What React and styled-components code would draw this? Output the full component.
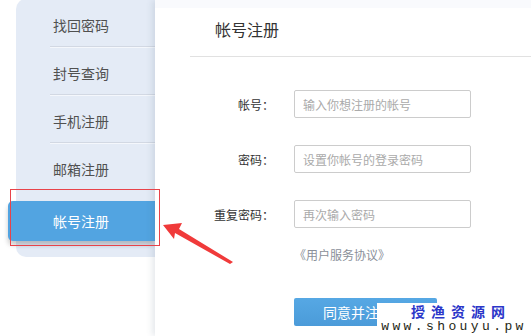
import styled, { createGlobalStyle } from "styled-components"

const menu = ["找回密码", "封号查询", "手机注册", "邮箱注册"]

const fields = [
    { label: "帐号：", hint: "输入你想注册的帐号" },
    { label: "密码：", hint: "设置你帐号的登录密码" },
    { label: "重复密码：", hint: "再次输入密码" },
]

const App = () => {
    return <>
        <Global/>
        <Page>
            {/*---------------- 左侧菜单 ----------------*/}
            <Side>
                <Panel>
                    <Menu>
                        {menu.map((m, i) =>
                            <MenuItem key={m} $line={i < menu.length - 1}>{m}</MenuItem>
                        )}
                        <ActiveItem>帐号注册</ActiveItem>
                    </Menu>
                </Panel>
            </Side>

            {/*---------------- 注册表单 ----------------*/}
            <Main>
                <Card>
                    <Header>帐号注册</Header>
                    <Form>
                        {fields.map(f => <Row key={f.label}>
                            <Label>{f.label}</Label>
                            <Input placeholder={f.hint}/>
                        </Row>)}
                    </Form>
                    <Agreement>《用户服务协议》</Agreement>
                    <Submit>同意并注册</Submit>
                </Card>
            </Main>

            {/* 标注 : 红框 + 箭头 */}
            <Mark/>
            <Arrow viewBox="0 0 531 336">
                <polygon points="163,225 182,223 179,229 233,262 230,264 175,233 174,239" fill="#f03a3a"/>
            </Arrow>

            <Watermark>
                <Site>授渔资源网</Site>
                <Url>www.shouyu.pw</Url>
            </Watermark>
        </Page>
    </>
}

export default App


//-----------------------------------------------
// 전체 :

const Global = createGlobalStyle`
    * { box-sizing: border-box; }
    body {
        margin: 0;
        background: #ffffff;
        font-family: "Noto Sans CJK SC", "Liberation Sans", sans-serif;
    }
`
const Page = styled.div`
    position: relative;
    display: flex;
    width: 531px;
    height: 336px;
    overflow: hidden;
    background: #ffffff;
`

//-----------------------------------------------
// 左侧菜单 :

const Side = styled.div`
    width: 155px;
    flex-shrink: 0;
    padding-left: 16px;
`
const Panel = styled.div`
    height: 258px;
    background: #e4ebf6;
    border-radius: 10px 0 0 10px;
`
const Menu = styled.div`
    margin-top: -1px;
    display: flex;
    flex-direction: column;
`
const MenuItem = styled.div`
    height: 48px;
    padding-top: 17px;
    font-size: 14px;
    line-height: 18px;
    color: #505050;
    border-bottom: 1px solid ${p => p.$line ? "#d2d8e3" : "transparent"};
    box-shadow: ${p => p.$line ? "0 1px 0 #f4f7fc" : "none"};
    margin-left: ${p => p.$line ? "34px" : "0"};
    padding-left: ${p => p.$line ? "3px" : "37px"};
`
const ActiveItem = styled.div`
    margin: 10px 0 0 -8px;
    width: 147px;
    height: 40px;
    padding-left: 45px;
    display: flex;
    align-items: center;
    font-size: 14px;
    color: #ffffff;
    background: #52a4e1;
    border-radius: 5px 0 0 5px;
    box-shadow: 0 4px 5px rgba(0, 0, 0, 0.22);
`

//-----------------------------------------------
// 注册表单 :

const Main = styled.div`
    position: relative;
    z-index: 1;
    flex: 1;
    padding-top: 8px;
    background: #f9fafd;
    box-shadow: -3px 0 6px rgba(60, 80, 110, 0.12);
`
const Card = styled.div`
    height: 100%;
    background: #ffffff;
`
const Header = styled.div`
    margin-left: 35px;
    padding: 10px 0 16px 25px;
    font-size: 16px;
    line-height: 22px;
    color: #333333;
    border-bottom: 1px solid #e1e1e1;
`
const Form = styled.div`
    margin-top: 33px;
    display: flex;
    flex-direction: column;
    gap: 27px;
`
const Row = styled.div`
    display: grid;
    grid-template-columns: 119px 177px;
    column-gap: 20px;
    align-items: center;
`
const Label = styled.span`
    text-align: right;
    font-size: 12px;
    color: #333333;
`
const Input = styled.input`
    height: 28px;
    padding: 0 8px;
    border: 1px solid #cccccc;
    border-radius: 2px;
    font-family: inherit;
    font-size: 12px;
    outline: none;

    &::placeholder {
        color: #aaaaaa;
    }
`
const Agreement = styled.div`
    margin: 18px 0 0 139px;
    font-size: 12px;
    line-height: 18px;
    color: #8a8f99;
`
const Submit = styled.button`
    display: block;
    margin: 34px 0 0 139px;
    width: 143px;
    height: 28px;
    padding: 0 0 0 29px;
    text-align: left;
    border: none;
    border-radius: 2px;
    background: linear-gradient(#56a8e4, #4b9bd9);
    font-family: inherit;
    font-size: 14px;
    color: #ffffff;
`

//-----------------------------------------------
// 标注 / 水印 :

const Mark = styled.div`
    position: absolute;
    z-index: 2;
    left: 10px;
    top: 189px;
    width: 150px;
    height: 57px;
    border: 1px solid #e8434a;
`
const Arrow = styled.svg`
    position: absolute;
    z-index: 2;
    left: 0;
    top: 0;
    width: 531px;
    height: 336px;
    pointer-events: none;
`
const Watermark = styled.div`
    position: absolute;
    z-index: 3;
    right: 0;
    bottom: 0;
    width: 154px;
    height: 33px;
    background: #ffffff;
    display: flex;
    flex-direction: column;
    align-items: center;
`
const Site = styled.div`
    padding-left: 14px;
    font-size: 14px;
    line-height: 16px;
    font-weight: bold;
    letter-spacing: 6px;
    color: #2b36c9;
`
const Url = styled.div`
    margin-top: 1px;
    font-family: "Liberation Mono", monospace;
    font-size: 13px;
    line-height: 14px;
    letter-spacing: 3.4px;
    color: #1e2614;
`
